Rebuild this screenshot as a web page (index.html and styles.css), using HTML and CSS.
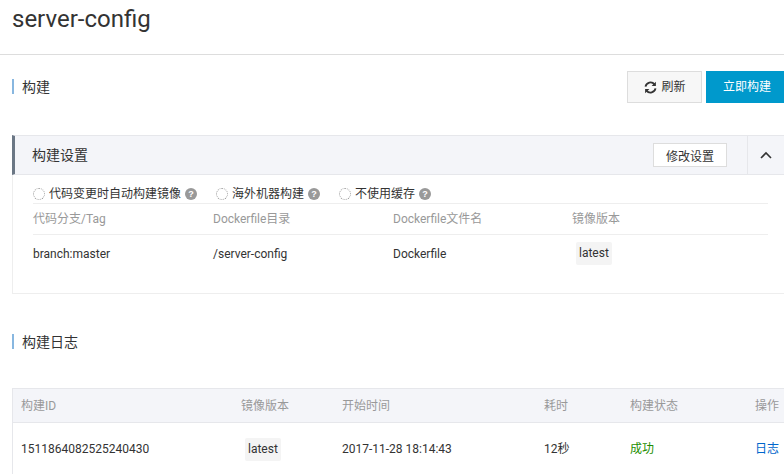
FILE: index.html
```html
<!DOCTYPE html>
<html lang="zh">
<head>
<meta charset="utf-8">
<title>server-config</title>
<link rel="stylesheet" href="styles.css">
</head>
<body>
<header class="page-title"><h1>server-config</h1></header>
<main class="content">
  <section class="bar">
    <h2 class="sec-title">构建</h2>
    <div class="actions">
      <button class="btn btn-light"><svg class="refresh" viewBox="0 0 14 14" width="13" height="13"><path d="M1.6 6A5.5 5.5 0 0 1 11.3 3.6M12.4 8A5.5 5.5 0 0 1 2.7 10.4" fill="none" stroke="#333" stroke-width="2"/><path d="M12.8 0.8V5.4H8.2zM1.2 13.2V8.6H5.8z" fill="#333"/></svg>刷新</button>
      <button class="btn btn-primary">立即构建</button>
    </div>
  </section>
  <section class="panel">
    <div class="panel-head">
      <span class="panel-title">构建设置</span>
      <button class="btn-edit">修改设置</button>
      <span class="collapse"><svg viewBox="0 0 12 8" width="12" height="8"><path d="M1 7L6 2L11 7" fill="none" stroke="#333" stroke-width="1.6"/></svg></span>
    </div>
    <div class="panel-body">
      <div class="options">
        <label class="opt"><i class="radio"></i>代码变更时自动构建镜像<i class="help">?</i></label>
        <label class="opt"><i class="radio"></i>海外机器构建<i class="help">?</i></label>
        <label class="opt"><i class="radio"></i>不使用缓存<i class="help">?</i></label>
      </div>
      <div class="cfg-row cfg-head">
        <span class="c1">代码分支/Tag</span><span class="c2">Dockerfile目录</span><span class="c3">Dockerfile文件名</span><span>镜像版本</span>
      </div>
      <div class="cfg-row cfg-data">
        <span class="c1">branch:master</span><span class="c2">/server-config</span><span class="c3">Dockerfile</span><span class="tag">latest</span>
      </div>
    </div>
  </section>
  <h2 class="sec-title log-title">构建日志</h2>
  <section class="log">
    <div class="log-row log-head">
      <span class="l1">构建ID</span><span class="l2">镜像版本</span><span class="l3">开始时间</span><span class="l4">耗时</span><span class="l5">构建状态</span><span>操作</span>
    </div>
    <div class="log-row log-data">
      <span class="l1">1511864082525240430</span><span class="l2"><span class="tag">latest</span></span><span class="l3">2017-11-28 18:14:43</span><span class="l4">12秒</span><span class="l5 ok">成功</span><span class="link">日志</span>
    </div>
  </section>
</main>
</body>
</html>
```
FILE: styles.css
```css
* { box-sizing: border-box; }
html, body { margin: 0; height: 474px; overflow: hidden; background: #fff; }
body { font: 12px/18px Roboto, "Noto Sans CJK SC", sans-serif; color: #333; }
.page-title { height: 55px; border-bottom: 1px solid #ddd; padding-left: 12px; }
h1 { margin: 0; font-size: 24px; font-weight: 400; line-height: 39px; color: #333; }
.content { padding-left: 12px; width: 784px; }
.bar { display: flex; justify-content: space-between; padding-top: 16px; height: 80px; }
.sec-title { margin: 0; font-size: 14px; font-weight: 400; line-height: 17px; height: 15px; padding-left: 8px; border-left: 2px solid #88b7e0; }
.bar .sec-title { margin-top: 8px; }
.actions { display: flex; gap: 4px; }
.btn { height: 32px; font: inherit; border-radius: 0; padding: 0; display: flex; align-items: center; justify-content: center; }
.btn-light { width: 75px; border: 1px solid #ddd; background: #f7f7f7; color: #333; gap: 4px; padding-left: 1px; }
.btn-primary { width: 78px; border: 0; background: #0099cc; color: #fff; padding-left: 4px; }
.panel { height: 159px; border: 1px solid #eee; border-right: 0; border-top: 0; }
.panel-head { height: 40px; display: flex; align-items: center; background: #f4f5f9; border-top: 1px solid #e6e7eb; border-bottom: 1px solid #e6e7eb; border-left: 3px solid #6b7785; margin-left: -1px; padding-left: 17px; font-size: 14px; }
.panel-title { flex: 1; }
.btn-edit { width: 74px; height: 24px; padding: 0; font: 12px Roboto, "Noto Sans CJK SC", sans-serif; color: #333; background: #fff; border: 1px solid #ddd; margin-right: 20px; }
.collapse { width: 37px; height: 100%; border-left: 1px solid #e6e7eb; display: flex; align-items: center; justify-content: center; }
.panel-body { padding: 9px 16px 0 20px; }
.options { display: flex; gap: 19px; height: 19px; color: #333; }
.opt { display: flex; align-items: center; }
.radio { width: 12px; height: 12px; border-radius: 50%; border: 1px dotted #999; margin-right: 4px; }
.help { width: 12px; height: 12px; border-radius: 50%; background: #999; color: #fff; font: bold 9px/12px "Liberation Sans", sans-serif; text-align: center; margin-left: 4px; }
.cfg-row { display: flex; align-items: center; border-top: 1px solid #eee; }
.cfg-head { height: 31px; color: #999; }
.cfg-data { height: 38px; }
.c1 { width: 180px; }
.c2 { width: 180px; }
.c3 { width: 180px; }
.cfg-head span:last-child { margin-left: -1px; }
.tag { display: inline-block; background: #f4f4f4; border-radius: 2px; padding: 0 3px; height: 23px; line-height: 23px; }
.cfg-data .tag { margin-left: 3px; }
.log-title { margin-top: 40px; }
.log { margin-top: 39px; border-left: 1px solid #e6e7eb; }
.log-row { display: flex; align-items: center; padding-left: 8px; }
.log-head { height: 35px; background: #f4f5f9; border-top: 1px solid #e6e7eb; border-bottom: 1px solid #e6e7eb; color: #999; }
.log-data { height: 52px; }
.log-data .tag { margin-left: 4px; }
.l1 { width: 220px; }
.l2 { width: 101px; }
.l3 { width: 202px; }
.l4 { width: 86px; }
.l5 { width: 125px; }
.ok { color: #1e8e00; }
.link { color: #0066cc; }
```
